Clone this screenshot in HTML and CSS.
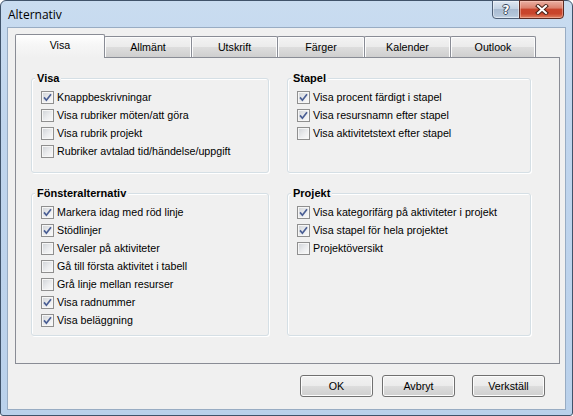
FILE: index.html
```html
<!DOCTYPE html>
<html lang="sv">
<head>
<meta charset="utf-8">
<title>Alternativ</title>
<link rel="stylesheet" href="styles.css">
</head>
<body>
<div class="window">
  <div class="titlebar">
    <span class="title">Alternativ</span>
    <div class="caption-btns">
      <div class="cbtn help">?</div>
      <div class="cbtn close">
        <svg width="14" height="11" viewBox="0 0 14 11"><path d="M3 2L11 9M11 2L3 9" stroke="#4a2218" stroke-width="4" stroke-linecap="square" fill="none"/><path d="M3 2L11 9M11 2L3 9" stroke="#fff" stroke-width="2" stroke-linecap="square" fill="none"/></svg>
      </div>
    </div>
  </div>
  <div class="client">
    <div class="tabs">
      <div class="tab active w90">Visa</div>
      <div class="tab w88">Allmänt</div>
      <div class="tab w87">Utskrift</div>
      <div class="tab w88">Färger</div>
      <div class="tab w87">Kalender</div>
      <div class="tab w86">Outlook</div>
    </div>
    <div class="panel">
      <div class="group">
        <div class="group-title">Visa</div>
        <div class="opt"><span class="cb"><svg viewBox="0 0 9 9"><path d="M1 4.4L3.4 7.2L8 1.2" class="tick"/></svg></span>Knappbeskrivningar</div>
        <div class="opt"><span class="cb"></span>Visa rubriker möten/att göra</div>
        <div class="opt"><span class="cb"></span>Visa rubrik projekt</div>
        <div class="opt"><span class="cb"></span>Rubriker avtalad tid/händelse/uppgift</div>
      </div>
      <div class="group">
        <div class="group-title">Stapel</div>
        <div class="opt"><span class="cb"><svg viewBox="0 0 9 9"><path d="M1 4.4L3.4 7.2L8 1.2" class="tick"/></svg></span>Visa procent färdigt i stapel</div>
        <div class="opt"><span class="cb"><svg viewBox="0 0 9 9"><path d="M1 4.4L3.4 7.2L8 1.2" class="tick"/></svg></span>Visa resursnamn efter stapel</div>
        <div class="opt"><span class="cb"></span>Visa aktivitetstext efter stapel</div>
      </div>
      <div class="group">
        <div class="group-title">Fönsteralternativ</div>
        <div class="opt"><span class="cb"><svg viewBox="0 0 9 9"><path d="M1 4.4L3.4 7.2L8 1.2" class="tick"/></svg></span>Markera idag med röd linje</div>
        <div class="opt"><span class="cb"><svg viewBox="0 0 9 9"><path d="M1 4.4L3.4 7.2L8 1.2" class="tick"/></svg></span>Stödlinjer</div>
        <div class="opt"><span class="cb"></span>Versaler på aktiviteter</div>
        <div class="opt"><span class="cb"></span>Gå till första aktivitet i tabell</div>
        <div class="opt"><span class="cb"></span>Grå linje mellan resurser</div>
        <div class="opt"><span class="cb"><svg viewBox="0 0 9 9"><path d="M1 4.4L3.4 7.2L8 1.2" class="tick"/></svg></span>Visa radnummer</div>
        <div class="opt"><span class="cb"><svg viewBox="0 0 9 9"><path d="M1 4.4L3.4 7.2L8 1.2" class="tick"/></svg></span>Visa beläggning</div>
      </div>
      <div class="group">
        <div class="group-title">Projekt</div>
        <div class="opt"><span class="cb"><svg viewBox="0 0 9 9"><path d="M1 4.4L3.4 7.2L8 1.2" class="tick"/></svg></span>Visa kategorifärg på aktiviteter i projekt</div>
        <div class="opt"><span class="cb"><svg viewBox="0 0 9 9"><path d="M1 4.4L3.4 7.2L8 1.2" class="tick"/></svg></span>Visa stapel för hela projektet</div>
        <div class="opt"><span class="cb"></span>Projektöversikt</div>
      </div>
    </div>
    <div class="buttons">
      <div class="btn">OK</div>
      <div class="btn b-cancel">Avbryt</div>
      <div class="btn b-apply">Verkställ</div>
    </div>
  </div>
</div>
</body>
</html>
```
FILE: styles.css
```css
* { box-sizing: border-box; }
body {
  margin: 0;
  background: #fff;
  font-family: "Liberation Sans", Arial, sans-serif;
  font-size: 10.7px;
  color: #000;
}
.window {
  width: 573px;
  height: 416px;
  display: flex;
  flex-direction: column;
  padding: 0 6px 5px 6px;
  border: 1px solid #40536a;
  border-radius: 6px 6px 3px 3px;
  background: linear-gradient(#c9dcf0 0%, #c0d5ed 30%, #bad1eb 100%);
}
.titlebar {
  height: 26px;
  display: flex;
  flex: none;
}
.title {
  font-family: "Open Sans", "Noto Sans", sans-serif;
  font-size: 12px;
  line-height: 16px;
  margin-top: 6px;
  padding-left: 1px;
  color: #000;
}
.caption-btns {
  margin-left: auto;
  margin-right: 2px;
  margin-top: -1px;
  display: flex;
  align-self: flex-start;
}
.cbtn {
  height: 19px;
  border: 1px solid #4f6077;
  display: flex;
  align-items: center;
  justify-content: center;
}
.help {
  width: 28px;
  border-radius: 0 0 0 4px;
  background: linear-gradient(#dfe8f3 0%, #c3d2e3 45%, #a9bbd1 50%, #b4c6da 85%, #c8d7e8 100%);
  box-shadow: inset 0 0 0 1px rgba(255,255,255,0.45);
  color: #fff;
  font-family: "DejaVu Sans", sans-serif;
  font-weight: bold;
  font-size: 12px;
  text-shadow: 1px 0 0 #3b4a5e, -1px 0 0 #3b4a5e, 0 1px 0 #3b4a5e, 0 -1px 0 #3b4a5e;
}
.close {
  width: 45px;
  margin-left: -1px;
  border-color: #5b2a22;
  border-radius: 0 0 4px 0;
  background: linear-gradient(#eab0a3 0%, #dc826f 40%, #c8442c 50%, #c9452c 75%, #df8161 100%);
  box-shadow: inset 0 0 0 1px rgba(255,210,200,0.45);
}
.close svg { display: block; }
.client {
  flex: 1;
  display: flex;
  flex-direction: column;
  background: #f0f0f0;
  border: 1px solid #98acc3;
  padding: 6px 5px 0 7px;
}
.tabs {
  display: flex;
  align-items: flex-end;
  height: 23px;
  flex: none;
}
.tab {
  height: 21px;
  border: 1px solid #898c95;
  border-bottom: none;
  border-radius: 2px 2px 0 0;
  margin-left: -1px;
  background: linear-gradient(#f3f3f3 0%, #ebebeb 50%, #dddddd 51%, #cfcfcf 100%);
  box-shadow: inset 1px 1px 0 #fcfcfc, inset -1px 0 0 #fcfcfc;
  display: flex;
  align-items: center;
  justify-content: center;
  padding-bottom: 1px;
}
.tab.active {
  height: 24px;
  margin-left: 0;
  margin-bottom: -1px;
  position: relative;
  z-index: 1;
  background: linear-gradient(#ffffff 0%, #f7f7f7 40%, #f0f0f0 100%);
  box-shadow: none;
  padding-bottom: 4px;
}
.w90 { width: 90px; }
.w88 { width: 88px; }
.w87 { width: 87px; }
.w86 { width: 86px; }
.panel {
  width: 545px;
  height: 307px;
  flex: none;
  border: 1px solid #898c95;
  background: #f0f0f0;
  padding: 20px 0 0 15px;
  display: grid;
  grid-template-columns: 238px 244px;
  grid-template-rows: 95px 143px;
  column-gap: 18px;
  row-gap: 20px;
  align-content: start;
}
.group {
  position: relative;
  border: 1px solid #d5dfe5;
  border-radius: 3px;
  box-shadow: inset 1px 1px 0 #fff, 1px 1px 0 #fff;
  padding: 9px 0 0 9px;
}
.group-title {
  position: absolute;
  top: -8px;
  left: 3px;
  padding: 0 2px;
  background: #f0f0f0;
  font-weight: bold;
  font-size: 11px;
  line-height: 14px;
}
.opt {
  display: flex;
  align-items: center;
  gap: 3px;
  height: 18px;
  white-space: nowrap;
}
.cb {
  width: 13px;
  height: 13px;
  flex: none;
  border: 1px solid #8f8f8f;
  padding: 1px;
  background: linear-gradient(135deg, #d3d6da 0%, #ebecee 55%, #f8f8f8 100%) content-box, #f6f6f6;
}
.cb svg { display: block; width: 9px; height: 9px; overflow: visible; }
.tick {
  fill: none;
  stroke: #4a5e94;
  stroke-width: 1.7;
}
.buttons {
  display: flex;
  justify-content: flex-end;
  padding-right: 15px;
  margin-top: 11px;
}
.btn {
  width: 73px;
  height: 22px;
  border: 1px solid #707070;
  border-radius: 3px;
  background: linear-gradient(#f2f2f2 0%, #ebebeb 50%, #dddddd 51%, #cfcfcf 100%);
  box-shadow: inset 0 0 0 1px #fcfcfc;
  display: flex;
  align-items: center;
  justify-content: center;
}
.b-cancel { margin-left: 9px; }
.b-apply { margin-left: 17px; }
```
